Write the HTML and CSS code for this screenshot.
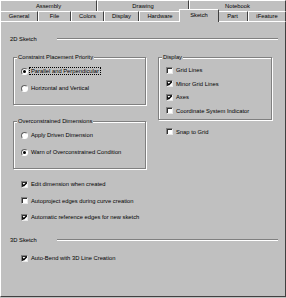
FILE: index.html
```html
<!DOCTYPE html>
<html lang="en">
<head>
    <meta charset="UTF-8">
    <title>Options - Sketch</title>
    <link rel="stylesheet" href="styles.css">
</head>
<body>
    <div class="dialog">
        <!-- Tab strip, back row -->
        <div class="tab-row top-row">
            <div class="tab" style="width:97px">Assembly</div>
            <div class="tab" style="width:92px">Drawing</div>
            <div class="tab" style="width:97px">Notebook</div>
        </div>
        <!-- Tab strip, front row -->
        <div class="tab-row front-row">
            <div class="tab" style="width:38px">General</div>
            <div class="tab" style="width:33px">File</div>
            <div class="tab" style="width:33px">Colors</div>
            <div class="tab" style="width:35px">Display</div>
            <div class="tab" style="width:42px">Hardware</div>
            <div class="tab active" style="width:40px">Sketch</div>
            <div class="tab" style="width:31px">Part</div>
            <div class="tab" style="width:38px">iFeature</div>
        </div>

        <div class="page">
            <div class="section-head">
                <span class="section-title">2D Sketch</span>
                <span class="section-line"></span>
            </div>

            <div class="columns">
                <div class="col-left">
                    <fieldset class="group">
                        <legend>Constraint Placement Priority</legend>
                        <div class="options radios">
                            <div class="option"><span class="radio on"><span class="dot"></span></span><span class="focus">Parallel and Perpendicular</span></div>
                            <div class="option"><span class="radio"></span><span>Horizontal and Vertical</span></div>
                        </div>
                    </fieldset>

                    <fieldset class="group group-second">
                        <legend>Overconstrained Dimensions</legend>
                        <div class="options radios">
                            <div class="option"><span class="radio"></span><span>Apply Driven Dimension</span></div>
                            <div class="option"><span class="radio on"><span class="dot"></span></span><span>Warn of Overconstrained Condition</span></div>
                        </div>
                    </fieldset>
                </div>

                <div class="col-right">
                    <fieldset class="group display-group">
                        <legend>Display</legend>
                        <div class="options checks">
                            <div class="option"><span class="check"></span><span>Grid Lines</span></div>
                            <div class="option"><span class="check on"><svg viewBox="0 0 5 5"><polyline points="0.3,2.2 1.8,3.7 4.7,0.8"/></svg></span><span>Minor Grid Lines</span></div>
                            <div class="option"><span class="check on"><svg viewBox="0 0 5 5"><polyline points="0.3,2.2 1.8,3.7 4.7,0.8"/></svg></span><span>Axes</span></div>
                            <div class="option"><span class="check"></span><span>Coordinate System Indicator</span></div>
                        </div>
                    </fieldset>
                    <div class="option snap"><span class="check"></span><span>Snap to Grid</span></div>
                </div>
            </div>

            <div class="main-checks">
                <div class="option"><span class="check on"><svg viewBox="0 0 5 5"><polyline points="0.3,2.2 1.8,3.7 4.7,0.8"/></svg></span><span>Edit dimension when created</span></div>
                <div class="option"><span class="check"></span><span>Autoproject edges during curve creation</span></div>
                <div class="option"><span class="check on"><svg viewBox="0 0 5 5"><polyline points="0.3,2.2 1.8,3.7 4.7,0.8"/></svg></span><span>Automatic reference edges for new sketch</span></div>
            </div>

            <div class="section-head section-3d">
                <span class="section-title">3D Sketch</span>
                <span class="section-line"></span>
            </div>

            <div class="main-checks bend">
                <div class="option"><span class="check on"><svg viewBox="0 0 5 5"><polyline points="0.3,2.2 1.8,3.7 4.7,0.8"/></svg></span><span>Auto-Bend with 3D Line Creation</span></div>
            </div>
        </div>
    </div>
</body>
</html>
```

FILE: styles.css
```css
body {
    margin: 0;
    background-color: #c0c0c0;
    font-family: "Liberation Sans", Arial, sans-serif;
    font-size: 5.8px;
    color: #000;
}
.dialog {
    width: 286px;
    height: 298px;
    display: flex;
    flex-direction: column;
    background-color: #c0c0c0;
}

/* tabs */
.tab-row {
    display: flex;
    flex: none;
}
.top-row {
    height: 11px;
}
.front-row {
    height: 10px;
    align-items: flex-end;
}
.tab {
    box-sizing: border-box;
    border-left: 1px solid #fff;
    border-top: 1px solid #fff;
    border-right: 1px solid #404040;
    text-align: center;
    white-space: nowrap;
    background-color: #c0c0c0;
}
.top-row .tab {
    height: 11px;
    line-height: 11px;
}
.front-row .tab {
    height: 10px;
    line-height: 9px;
}
.front-row .tab.active {
    height: 13px;
    line-height: 10px;
    margin: 0 -2px -1px;
    position: relative;
    z-index: 1;
}

/* page */
.page {
    flex: 1;
    margin-bottom: 1px;
    border-top: 1px solid #fff;
    border-left: 1px solid #fff;
    border-right: 1px solid #404040;
    border-bottom: 1px solid #404040;
}
.section-head {
    display: flex;
    align-items: center;
    height: 8px;
    margin-top: 13px;
}
.section-title {
    width: 56px;
    padding-left: 9px;
    box-sizing: border-box;
    white-space: nowrap;
}
.section-line {
    flex: 1;
    margin-right: 7px;
    border-top: 1px solid #808080;
    border-bottom: 1px solid #fff;
}
.section-3d {
    margin-top: 15px;
}

.columns {
    display: flex;
    gap: 12px;
    margin-top: 10px;
    padding-left: 12px;
}
.col-left {
    width: 133px;
}
.col-right {
    width: 114px;
}

.group {
    margin: 0;
    padding: 0 0 12px;
    min-width: 0;
    border: 1px solid #808080;
    box-shadow: inset 1px 1px 0 #fff, 1px 1px 0 #fff;
}
.group legend {
    margin-left: 3px;
    padding: 0 1px;
    line-height: 8px;
    background-color: #c0c0c0;
    white-space: nowrap;
}
.group-second {
    margin-top: 12px;
}
.display-group {
    padding-bottom: 4px;
}

.options {
    display: flex;
    flex-direction: column;
}
.radios {
    padding-top: 6px;
    gap: 9px;
}
.checks {
    padding-top: 5px;
    gap: 5.6px;
}
.option {
    display: flex;
    align-items: center;
    gap: 3px;
    height: 8px;
    margin-left: 7px;
    white-space: nowrap;
}
.snap {
    margin-top: 8px;
    margin-left: 8px;
}

.radio {
    box-sizing: border-box;
    width: 7px;
    height: 7px;
    flex: none;
    border-radius: 50%;
    border: 1px solid;
    border-color: #606060 #fff #fff #606060;
    background-color: #fff;
    display: flex;
    align-items: center;
    justify-content: center;
}
.radio .dot {
    width: 3px;
    height: 3px;
    border-radius: 50%;
    background-color: #000;
}
.focus {
    outline: 1px dotted #000;
    padding: 0 1px;
    margin-left: -1px;
}

.check {
    box-sizing: border-box;
    width: 7px;
    height: 7px;
    flex: none;
    border: 1px solid;
    border-color: #808080 #e8e8e8 #e8e8e8 #808080;
    box-shadow: inset 1px 1px 0 #303030;
    background-color: #fff;
    display: flex;
}
.check svg {
    width: 5px;
    height: 5px;
}
.check polyline {
    fill: none;
    stroke: #000;
    stroke-width: 1.4;
}

.main-checks {
    display: flex;
    flex-direction: column;
    gap: 8.5px;
    margin-top: 11px;
    padding-left: 13px;
}
.bend {
    margin-top: 10px;
}
```
